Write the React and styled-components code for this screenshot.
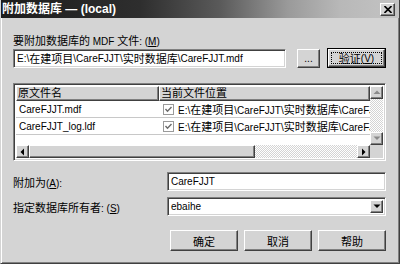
import React from "react";
import styled, { createGlobalStyle, css } from "styled-components";

const FONT = `"Liberation Sans", "Noto Sans CJK SC", sans-serif`;

const Global = createGlobalStyle`
  html, body { margin: 0; padding: 0; background: #d4d4d4; }
  body { font-family: ${FONT}; font-size: 10px; color: #000; }
  * { box-sizing: border-box; }
`;

const Han = styled.span`
  font-size: 11px;
`;

const T = ({ children }) =>
  React.Children.map(children, (c) => {
    if (typeof c !== "string") return c;
    return c
      .split(/([\u3000-\u9fff\uff00-\uffef]+)/)
      .filter(Boolean)
      .map((s, i) => (/[\u3000-\u9fff\uff00-\uffef]/.test(s) ? <Han key={i}>{s}</Han> : s));
  });

const raised = css`
  border: 1px solid;
  border-color: #ffffff #404040 #404040 #ffffff;
  box-shadow: inset -1px -1px #808080;
  background: #d4d4d4;
`;

const sunken = css`
  border: 1px solid;
  border-color: #808080 #ffffff #ffffff #808080;
  box-shadow: inset 1px 1px #404040, inset -1px -1px #d4d4d4;
  background: #ffffff;
`;

const dither = css`
  background: repeating-conic-gradient(#ffffff 0 25%, #d4d4d4 0 50%) 0 0 / 2px 2px;
`;

const Window = styled.div`
  width: 400px;
  height: 264px;
  display: flex;
  flex-direction: column;
  background: #d4d4d4;
  border: 1px solid;
  border-top: none;
  border-color: #d4d4d4 #404040 #404040 #d4d4d4;
  box-shadow: inset 1px 0 #fff, inset -1px -1px #808080;
  overflow: hidden;
`;

const TitleBar = styled.div`
  height: 18px;
  flex: none;
  display: flex;
  align-items: center;
  justify-content: space-between;
  padding: 0 5px 0 2px;
  margin: 0 -1px;
  background: linear-gradient(to right, #1c1c1c 0%, #2e2e2e 35%, #5a5a5a 55%, #9a9a9a 72%, #b8b8b8 85%, #c4c4c4 100%);
`;

const Title = styled.span`
  color: #fff;
  font-weight: bold;
  font-size: 12px;
  line-height: 14px;
  white-space: nowrap;
`;

const CloseBtn = styled.div`
  ${raised};
  width: 15px;
  height: 13px;
  display: flex;
  align-items: center;
  justify-content: center;
`;

const Body = styled.div`
  flex: 1;
  display: flex;
  flex-direction: column;
  padding: 16px 13px 0 12px;
`;

const Label = styled.div`
  height: 14px;
  line-height: 14px;
  white-space: nowrap;
`;

const InputRow = styled.div`
  display: flex;
  align-items: center;
  height: 20px;
`;

const TextBox = styled.div`
  ${sunken};
  width: ${(p) => p.$w}px;
  height: ${(p) => p.$h || 19}px;
  padding: 0 3px;
  display: flex;
  align-items: center;
  white-space: nowrap;
  overflow: hidden;
`;

const Button = styled.div`
  ${raised};
  width: ${(p) => p.$w}px;
  height: ${(p) => p.$h || 19}px;
  margin-left: ${(p) => p.$ml || 0}px;
  display: flex;
  align-items: center;
  justify-content: center;
  white-space: nowrap;
`;

const DefaultButton = styled.div`
  width: ${(p) => p.$w}px;
  height: 20px;
  margin-left: ${(p) => p.$ml || 0}px;
  border: 1px solid #000;
  display: flex;
`;

const DefaultInner = styled.div`
  ${raised};
  flex: 1;
  display: flex;
  align-items: center;
  justify-content: center;
  padding: 2px;
`;

const Focus = styled.div`
  flex: 1;
  align-self: stretch;
  border: 1px dotted #000;
  display: flex;
  align-items: center;
  justify-content: center;
`;

const List = styled.div`
  ${sunken};
  margin-top: 15px;
  height: 78px;
  padding: 2px;
  display: grid;
  grid-template-columns: 1fr 13px;
  grid-template-rows: 1fr 13px;
`;

const ListMain = styled.div`
  background: #fff;
  display: flex;
  flex-direction: column;
  overflow: hidden;
`;

const HeaderRow = styled.div`
  display: grid;
  grid-template-columns: 143px 1fr;
  height: 15px;
  flex: none;
`;

const HeaderCell = styled.div`
  ${raised};
  padding-left: 1px;
  line-height: 13px;
  white-space: nowrap;
  overflow: hidden;
`;

const DataRow = styled.div`
  display: grid;
  grid-template-columns: 143px 1fr;
  height: 17px;
  flex: none;
  border-bottom: 1px solid #c8c8c8;
`;

const Cell = styled.div`
  display: flex;
  align-items: center;
  padding-left: ${(p) => p.$pl || 3}px;
  gap: 4px;
  white-space: nowrap;
  overflow: hidden;
`;

const VScroll = styled.div`
  ${dither};
  display: flex;
  flex-direction: column;
  justify-content: space-between;
`;

const HScroll = styled.div`
  ${dither};
  display: flex;
  justify-content: space-between;
`;

const ArrowBtn = styled.div`
  ${raised};
  width: 13px;
  height: 13px;
  flex: none;
  display: flex;
  align-items: center;
  justify-content: center;
`;

const Thumb = styled.div`
  ${raised};
  width: 226px;
  height: 13px;
  margin-right: auto;
`;

const Corner = styled.div`
  background: #d4d4d4;
`;

const FormRow = styled.div`
  display: flex;
  align-items: center;
  justify-content: space-between;
  height: 19px;
  margin-top: ${(p) => p.$mt}px;
`;

const Select = styled.div`
  ${sunken};
  width: 219px;
  height: 19px;
  display: flex;
  align-items: center;
  padding: 2px 2px 2px 3px;
`;

const SelectText = styled.span`
  flex: 1;
`;

const ButtonRow = styled.div`
  display: flex;
  justify-content: flex-end;
  gap: 6px;
  margin-top: 14px;
`;

const Tri = ({ dir, color = "#000" }) => {
  const pts = {
    up: "0.5,5 4,1.5 7.5,5",
    down: "0.5,1.5 4,5 7.5,1.5",
    left: "5,0.5 1.5,4 5,7.5",
    right: "2,0.5 5.5,4 2,7.5",
  }[dir];
  return (
    <svg width="8" height="8" viewBox="0 0 8 8">
      <polygon points={pts} fill={color} />
    </svg>
  );
};

const Check = () => (
  <svg width="11" height="11" viewBox="0 0 11 11" style={{ flex: "none" }}>
    <rect x="0.5" y="0.5" width="10" height="10" fill="#fff" stroke="#9a9a9a" />
    <path d="M2.5 5 L4.5 7.2 L8.5 3" fill="none" stroke="#6a6a6a" strokeWidth="1.4" />
  </svg>
);

const rows = [
  { name: "CareFJJT.mdf", path: "E:\\在建项目\\CareFJJT\\实时数据库\\CareFJJT.mdf" },
  { name: "CareFJJT_log.ldf", path: "E:\\在建项目\\CareFJJT\\实时数据库\\CareFJJT_log.ldf" },
];

export default function App() {
  return (
    <>
      <Global />
      <Window>
        <TitleBar>
          <Title>附加数据库 — (local)</Title>
          <CloseBtn>
            <svg width="8" height="7" viewBox="0 0 8 7">
              <path d="M0.5 0 L7.5 7 M7.5 0 L0.5 7" stroke="#000" strokeWidth="1.6" />
            </svg>
          </CloseBtn>
        </TitleBar>
        <Body>
          <Label><T>要附加数据库的 MDF 文件: (</T><u>M</u>)</Label>
          <InputRow>
            <TextBox $w={273}><T>{"E:\\在建项目\\CareFJJT\\实时数据库\\CareFJJT.mdf"}</T></TextBox>
            <Button $w={23} $ml={11}>...</Button>
            <DefaultButton $w={59} $ml={7}>
              <DefaultInner>
                <Focus><T>验证(</T><u>V</u>)</Focus>
              </DefaultInner>
            </DefaultButton>
          </InputRow>
          <List>
            <ListMain>
              <HeaderRow>
                <HeaderCell><Han>原文件名</Han></HeaderCell>
                <HeaderCell><Han>当前文件位置</Han></HeaderCell>
              </HeaderRow>
              {rows.map((r) => (
                <DataRow key={r.name}>
                  <Cell>{r.name}</Cell>
                  <Cell $pl={4}>
                    <Check />
                    <span><T>{r.path}</T></span>
                  </Cell>
                </DataRow>
              ))}
            </ListMain>
            <VScroll>
              <ArrowBtn><Tri dir="up" color="#8a8a8a" /></ArrowBtn>
              <ArrowBtn><Tri dir="down" color="#8a8a8a" /></ArrowBtn>
            </VScroll>
            <HScroll>
              <ArrowBtn><Tri dir="left" /></ArrowBtn>
              <Thumb />
              <ArrowBtn><Tri dir="right" /></ArrowBtn>
            </HScroll>
            <Corner />
          </List>
          <FormRow $mt={11}>
            <span><T>附加为(</T><u>A</u>):</span>
            <TextBox $w={219}>CareFJJT</TextBox>
          </FormRow>
          <FormRow $mt={6}>
            <span><T>指定数据库所有者: (</T><u>S</u>)</span>
            <Select>
              <SelectText>ebaihe</SelectText>
              <ArrowBtn><Tri dir="down" /></ArrowBtn>
            </Select>
          </FormRow>
          <ButtonRow>
            <Button $w={68} $h={21}><Han>确定</Han></Button>
            <Button $w={68} $h={21}><Han>取消</Han></Button>
            <Button $w={68} $h={21}><Han>帮助</Han></Button>
          </ButtonRow>
        </Body>
      </Window>
    </>
  );
}
